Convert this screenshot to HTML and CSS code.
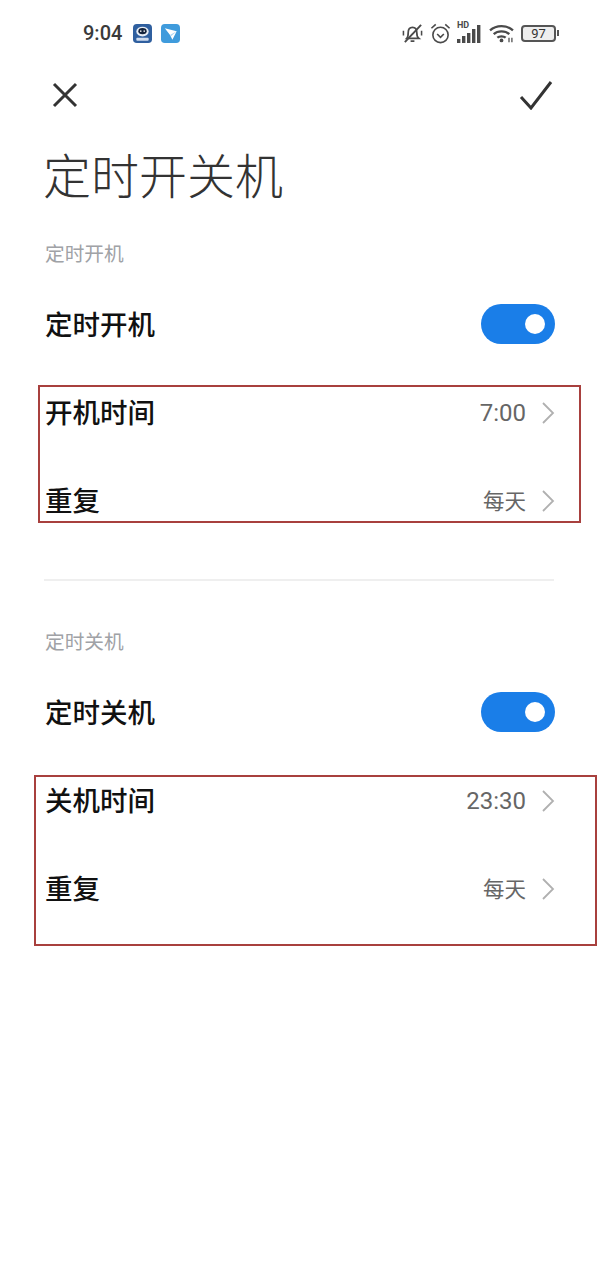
FILE: index.html
```html
<!DOCTYPE html>
<html lang="zh-CN">

<head>
    <meta charset="UTF-8">
    <meta name="viewport" content="width=device-width, initial-scale=1.0">
    <title>定时开关机</title>
    <link rel="stylesheet" href="styles.css">
</head>

<body>
    <div class="phone">
        <!--Status bar-->
        <div class="statusBar">
            <div class="statusLeft">
                <span class="clock">9:04</span>
                <svg class="appIcon" viewBox="0 0 20 20">
                    <rect width="20" height="20" rx="4" fill="#2f5f9f" />
                    <ellipse cx="10" cy="8" rx="6.5" ry="5.2" fill="#e8eef6" />
                    <ellipse cx="10" cy="7.5" rx="4.4" ry="3.2" fill="#14233c" />
                    <circle cx="8.2" cy="7.5" r="0.8" fill="#fff" />
                    <circle cx="11.8" cy="7.5" r="0.8" fill="#fff" />
                    <rect x="3.5" y="14.5" width="13" height="3" rx="1" fill="#cfdcee" />
                </svg>
                <svg class="appIcon" viewBox="0 0 20 20">
                    <rect width="20" height="20" rx="4" fill="#3f9bdc" />
                    <path d="M4 4.5 L16.5 7.5 L12 16.5 L9.5 11.5 Z" fill="#ffffff" />
                    <path d="M9.5 11.5 L16.5 7.5 L10.5 13 Z" fill="#a9d4f2" />
                </svg>
            </div>
            <div class="statusRight">
                <svg class="muteIcon" viewBox="0 0 22 22" fill="none" stroke="#4a4a4a" stroke-width="1.8">
                    <path d="M5 16 C6.5 14.5 6.5 12 6.5 10 C6.5 6.5 8.5 4.5 11 4.5 C13.5 4.5 15.5 6.5 15.5 10 C15.5 12 15.5 14.5 17.5 16 Z" />
                    <path d="M9 19 H13" />
                    <path d="M3 20 L20 2" stroke-width="2" />
                    <path d="M1.5 8 V13 M20.5 8 V13" stroke-width="1.6" />
                </svg>
                <svg class="alarmIcon" viewBox="0 0 22 22" fill="none" stroke="#4a4a4a" stroke-width="1.7">
                    <circle cx="11" cy="12.5" r="8" />
                    <path d="M7.5 11.5 L11 15 L14.5 11.5" />
                    <path d="M1.5 5.5 L6 1.5 M20.5 5.5 L16 1.5" />
                </svg>
                <div class="signal">
                    <span class="hd">HD</span>
                    <svg class="signalBars" viewBox="0 0 24 18" fill="#4a4a4a">
                        <rect x="0" y="14" width="3.4" height="4" />
                        <rect x="5" y="11" width="3.4" height="7" />
                        <rect x="10" y="8" width="3.4" height="10" />
                        <rect x="15" y="4" width="3.4" height="14" />
                        <rect x="20" y="0" width="3.4" height="18" />
                    </svg>
                </div>
                <svg class="wifiIcon" viewBox="0 0 24 18" fill="none" stroke="#4a4a4a" stroke-width="2.2">
                    <path d="M1 6 C7 0.5 17 0.5 23 6" />
                    <path d="M4.5 9.5 C8.5 6 15.5 6 19.5 9.5" />
                    <path d="M8 13 C10 11.3 14 11.3 16 13" />
                    <circle cx="12" cy="15.7" r="1.8" fill="#4a4a4a" stroke="none" />
                    <path d="M19.2 13 V17.5 M22 13 V17.5" stroke-width="1.2" />
                </svg>
                <div class="battery">
                    <div class="batteryBody">97</div>
                    <div class="batteryTip"></div>
                </div>
            </div>
        </div>

        <!--Nav-->
        <div class="navBar">
            <svg class="navIcon" viewBox="0 0 30 30" fill="none" stroke="#333" stroke-width="3">
                <path d="M4 4 L26 26 M26 4 L4 26" />
            </svg>
            <svg class="navIcon" viewBox="0 0 34 30" fill="none" stroke="#333" stroke-width="3">
                <path d="M2 17 L12 28 L32 2" />
            </svg>
        </div>

        <h1 class="pageTitle">定时开关机</h1>

        <div class="section">
            <div class="sectionLabel">定时开机</div>
            <div class="row">
                <span class="rowTitle">定时开机</span>
                <div class="toggle"><span class="knob"></span></div>
            </div>
            <div class="row">
                <span class="rowTitle">开机时间</span>
                <div class="rowValue">
                    <span class="timeText">7:00</span>
                    <svg class="chevron" viewBox="0 0 14 22" fill="none" stroke="#b0b0b0" stroke-width="1.8">
                        <path d="M2 1 L12 11 L2 21" />
                    </svg>
                </div>
            </div>
            <div class="row">
                <span class="rowTitle">重复</span>
                <div class="rowValue">
                    <span class="dayText">每天</span>
                    <svg class="chevron" viewBox="0 0 14 22" fill="none" stroke="#b0b0b0" stroke-width="1.8">
                        <path d="M2 1 L12 11 L2 21" />
                    </svg>
                </div>
            </div>
        </div>

        <div class="separator"></div>

        <div class="section">
            <div class="sectionLabel">定时关机</div>
            <div class="row">
                <span class="rowTitle">定时关机</span>
                <div class="toggle"><span class="knob"></span></div>
            </div>
            <div class="row">
                <span class="rowTitle">关机时间</span>
                <div class="rowValue">
                    <span class="timeText">23:30</span>
                    <svg class="chevron" viewBox="0 0 14 22" fill="none" stroke="#b0b0b0" stroke-width="1.8">
                        <path d="M2 1 L12 11 L2 21" />
                    </svg>
                </div>
            </div>
            <div class="row">
                <span class="rowTitle">重复</span>
                <div class="rowValue">
                    <span class="dayText">每天</span>
                    <svg class="chevron" viewBox="0 0 14 22" fill="none" stroke="#b0b0b0" stroke-width="1.8">
                        <path d="M2 1 L12 11 L2 21" />
                    </svg>
                </div>
            </div>
        </div>

        <!--Red annotation boxes drawn on top of the screenshot-->
        <div class="mark markOn"></div>
        <div class="mark markOff"></div>
    </div>
</body>

</html>
```

FILE: styles.css
```css
* {
    box-sizing: border-box;
}

body {
    margin: 0;
    background-color: #fff;
    font-family: "Noto Sans CJK SC", "Roboto", sans-serif;
    color: #111;
}

.phone {
    position: relative;
    width: 600px;
    height: 1285px;
    overflow: hidden;
}

.statusBar {
    display: flex;
    justify-content: space-between;
    align-items: center;
    height: 66px;
    padding: 0 41px 0 83px;
}

.statusLeft,
.statusRight {
    display: flex;
    align-items: center;
}

.clock {
    width: 50px;
    font-family: "Roboto", sans-serif;
    font-size: 20px;
    font-weight: 500;
    color: #3a3a3a;
}

.appIcon {
    width: 19px;
    height: 19px;
    margin-right: 9px;
}

.muteIcon {
    width: 21px;
    height: 21px;
    margin-right: 7px;
}

.alarmIcon {
    width: 21px;
    height: 21px;
    margin-right: 6px;
}

.signal {
    position: relative;
    width: 24px;
    height: 22px;
    margin-right: 8px;
}

.hd {
    position: absolute;
    left: 0;
    top: -2px;
    font-family: "Roboto", sans-serif;
    font-size: 9px;
    font-weight: 700;
    color: #4a4a4a;
}

.signalBars {
    position: absolute;
    right: 0;
    bottom: 1px;
    width: 24px;
    height: 18px;
}

.wifiIcon {
    width: 25px;
    height: 19px;
    margin-right: 7px;
}

.battery {
    display: flex;
    align-items: center;
}

.batteryBody {
    width: 35px;
    height: 17px;
    border: 2px solid #555;
    border-radius: 4px;
    background-color: #eee;
    font-family: "Roboto", sans-serif;
    font-size: 13px;
    line-height: 13px;
    text-align: center;
    color: #333;
}

.batteryTip {
    width: 2px;
    height: 6px;
    margin-left: 1px;
    background-color: #555;
}

.navBar {
    display: flex;
    justify-content: space-between;
    align-items: center;
    height: 58px;
    padding: 0 47px 0 50px;
}

.navIcon {
    height: 30px;
    width: auto;
}

.pageTitle {
    margin: 0;
    padding-left: 43px;
    height: 96px;
    font-size: 48px;
    font-weight: 300;
    line-height: 98px;
    color: #333;
}

.section {
    padding: 0 45px;
}

.sectionLabel {
    height: 59px;
    font-size: 19.7px;
    font-weight: 400;
    line-height: 66px;
    color: #a0a2a6;
}

.row {
    display: flex;
    justify-content: space-between;
    align-items: center;
    height: 88px;
}

.rowTitle {
    font-size: 27.5px;
    font-weight: 500;
    color: #111;
}

.rowValue {
    display: flex;
    align-items: center;
    padding-top: 4px;
    color: #666;
}

.timeText {
    font-family: "Roboto", sans-serif;
    font-size: 24px;
    font-weight: 400;
}

.dayText {
    font-size: 21.5px;
    font-weight: 400;
    line-height: 26px;
    margin-top: -2px;
}

.chevron {
    width: 14px;
    height: 22px;
    margin-left: 15px;
}

.toggle {
    display: flex;
    justify-content: flex-end;
    align-items: center;
    width: 74px;
    height: 40px;
    margin-top: 1px;
    padding-right: 10px;
    border-radius: 20px;
    background-color: #1a7ee8;
}

.knob {
    width: 20px;
    height: 20px;
    border-radius: 50%;
    background-color: #fff;
}

.separator {
    height: 2px;
    margin: 36px 46px 27px 44px;
    background-color: #efefef;
}

.mark {
    position: absolute;
    border: 2px solid #a8403e;
}

.markOn {
    left: 38px;
    top: 385px;
    width: 543px;
    height: 138px;
}

.markOff {
    left: 34px;
    top: 775px;
    width: 563px;
    height: 171px;
}
```
